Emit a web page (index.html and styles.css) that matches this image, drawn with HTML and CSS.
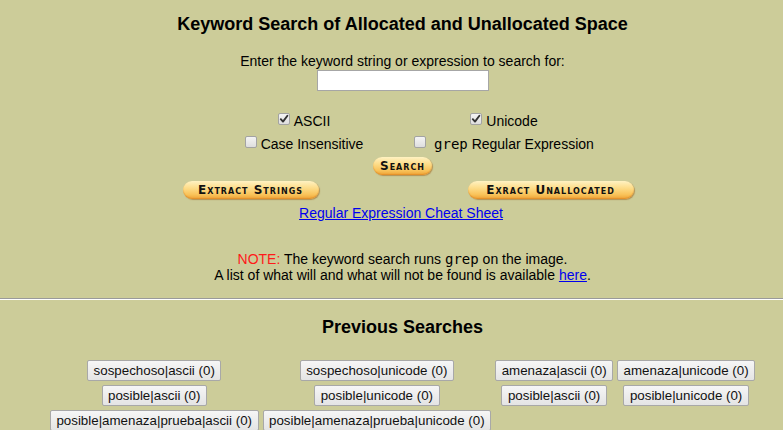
FILE: index.html
```html
<!DOCTYPE html>
<html lang="en">
<head>
<meta charset="utf-8">
<title>Keyword Search</title>
<link rel="stylesheet" href="styles.css">
</head>
<body>
<div class="page">
  <h1 class="title">Keyword Search of Allocated and Unallocated Space</h1>
  <form class="search">
    <p class="prompt">Enter the keyword string or expression to search for:</p>
    <input class="kw" type="text">
    <div class="opts">
      <label class="opt"><span class="cb"><svg viewBox="0 0 12 12" width="12" height="12"><path d="M2.8 6.2 L5 8.6 L9.4 2.8" fill="none" stroke="#333" stroke-width="1.9" stroke-linecap="round" stroke-linejoin="round"/></svg></span>ASCII</label>
      <label class="opt"><span class="cb"><svg viewBox="0 0 12 12" width="12" height="12"><path d="M2.8 6.2 L5 8.6 L9.4 2.8" fill="none" stroke="#333" stroke-width="1.9" stroke-linecap="round" stroke-linejoin="round"/></svg></span>Unicode</label>
      <label class="opt"><span class="cb"></span>Case Insensitive</label>
      <label class="opt"><span class="cb"></span> <code class="mono">grep</code> Regular Expression</label>
    </div>
    <div class="go"><span class="pill pill-search">Search</span></div>
    <div class="extract">
      <div class="extract-cell"><span class="pill pill-strings">Extract Strings</span></div>
      <div class="extract-cell"><span class="pill pill-unalloc">Exract Unallocated</span></div>
    </div>
    <p class="cheat"><a href="#">Regular Expression Cheat Sheet</a></p>
  </form>
  <p class="note"><span class="warn">NOTE:</span> The keyword search runs <code class="mono">grep</code> on the image.<br>A list of what will and what will not be found is available <a href="#">here</a>.</p>
  <hr class="rule">
  <h2 class="prev-title">Previous Searches</h2>
  <div class="prev">
    <button class="prev-btn" type="button">sospechoso|ascii (0)</button>
    <button class="prev-btn" type="button">sospechoso|unicode (0)</button>
    <button class="prev-btn" type="button">amenaza|ascii (0)</button>
    <button class="prev-btn" type="button">amenaza|unicode (0)</button>
    <button class="prev-btn" type="button">posible|ascii (0)</button>
    <button class="prev-btn" type="button">posible|unicode (0)</button>
    <button class="prev-btn" type="button">posible|ascii (0)</button>
    <button class="prev-btn" type="button">posible|unicode (0)</button>
    <button class="prev-btn" type="button">posible|amenaza|prueba|ascii (0)</button>
    <button class="prev-btn" type="button">posible|amenaza|prueba|unicode (0)</button>
  </div>
</div>
</body>
</html>
```

FILE: styles.css
```css
html, body {
  margin: 0;
  padding: 0;
  overflow: hidden;
  background: #cccc99;
}

body {
  font-family: "Liberation Sans", Arial, sans-serif;
  font-size: 14px;
  color: #000;
}

.page {
  width: 805px;
  text-align: center;
}

.title {
  margin: 13px 0 0;
  font-size: 18px;
  line-height: 22px;
  font-weight: bold;
}

.search {
  margin: 0;
}

.prompt {
  margin: 18px 0 0;
  line-height: 16px;
}

.kw {
  display: block;
  box-sizing: border-box;
  width: 172px;
  height: 21px;
  margin: 1px auto 0;
  padding: 1px 3px;
  border: 1px solid #a6a6a6;
  background: #fff;
  font: 13px "Liberation Sans", Arial, sans-serif;
}

.opts {
  display: grid;
  grid-template-columns: 200px 200px;
  justify-content: center;
  padding-left: 3px;
  margin-top: 19px;
}

.opt {
  display: block;
  line-height: 23px;
  white-space: nowrap;
}

.cb {
  display: inline-block;
  box-sizing: border-box;
  width: 12px;
  height: 12px;
  margin-right: 4px;
  vertical-align: 1px;
  border: 1px solid #a3a3a3;
  border-radius: 2px;
  background: linear-gradient(#f4f4f4, #dedede);
}

.cb svg {
  display: block;
  margin: -1px;
}

.mono {
  font-family: "DejaVu Sans Mono", "Liberation Mono", monospace;
  font-size: 14px;
}

.go {
  margin-top: 1px;
  height: 18px;
}

.pill {
  display: inline-block;
  box-sizing: border-box;
  height: 18px;
  line-height: 18px;
  border-radius: 9px;
  background: linear-gradient(#fff2c2 0%, #fddc88 40%, #f9c35a 75%, #eea336 100%);
  box-shadow: 1px 1px 1px rgba(160, 100, 30, 0.55), inset 0 -1px 1px rgba(220, 130, 30, 0.6);
  font-family: "DejaVu Sans", sans-serif;
  font-weight: bold;
  font-variant: small-caps;
  font-size: 12px;
  letter-spacing: 1px;
  color: #111;
  text-align: center;
  vertical-align: top;
}

.pill-search {
  width: 59px;
}

.pill-strings {
  width: 136px;
}

.pill-unalloc {
  width: 166px;
}

.extract {
  display: grid;
  grid-template-columns: 300px 300px;
  justify-content: center;
  padding-right: 4px;
  margin-top: 6px;
  height: 18px;
}

.cheat {
  margin: 6px 0 0;
  padding-right: 3px;
  line-height: 16px;
}

a {
  color: #0000ee;
  text-decoration: underline;
}

.note {
  margin: 30px 0 0;
  line-height: 16px;
}

.warn {
  color: #ff1a1a;
}

.rule {
  margin: 15px 0 0;
  height: 0;
  border: 0;
  border-top: 1px solid #9a9a9a;
  border-bottom: 1px solid #ffffff;
}

.prev-title {
  margin: 16px 0 0;
  font-size: 18px;
  line-height: 22px;
  font-weight: bold;
}

.prev {
  display: grid;
  grid-template-columns: repeat(4, auto);
  justify-content: center;
  justify-items: center;
  column-gap: 4px;
  row-gap: 4px;
  margin-top: 22px;
}

.prev-btn {
  box-sizing: border-box;
  height: 21px;
  margin: 0;
  padding: 0 5.5px;
  border: 1px solid #a8a8a8;
  border-radius: 2px;
  background: linear-gradient(#f6f6f6, #e4e4e4);
  font-family: "Liberation Sans", Arial, sans-serif;
  font-size: 13.33px;
  line-height: 19px;
  color: #111;
  white-space: nowrap;
}
```
